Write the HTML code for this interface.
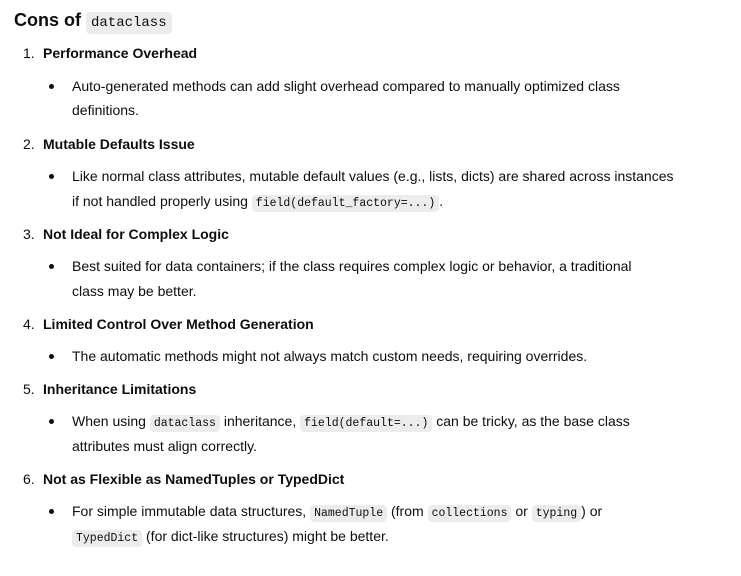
<!DOCTYPE html>
<html><head><style>
body{margin:0;width:741px;height:576px;background:#fff;font-family:"Liberation Sans",sans-serif;color:#0d0d0d;position:relative;overflow:hidden}
.l{position:absolute;white-space:nowrap;font-size:14px;line-height:25px;height:25px}
.h{font-weight:bold}
.n{position:absolute;font-size:14px;line-height:25px}
.d{position:absolute;width:5px;height:5px;border-radius:50%;background:#0d0d0d}
code{font-family:"Liberation Mono",monospace;font-size:11.5px;background:#ececec;border-radius:4px;padding:2px 4px}
</style></head><body>
<div class="l h" style="left:14px;top:8px;font-size:18px;line-height:25px">Cons of <code style="font-size:14px;font-weight:normal;padding:3px 5px">dataclass</code></div>

<div class="n" style="left:23px;top:41px">1.</div><div class="l h" style="left:43px;top:41px">Performance Overhead</div>
<div class="d" style="left:49px;top:84px"></div>
<div class="l" style="left:72px;top:74px">Auto-generated methods can add slight overhead compared to manually optimized class</div>
<div class="l" style="left:72px;top:98px">definitions.</div>

<div class="n" style="left:23px;top:132px">2.</div><div class="l h" style="left:43px;top:132px">Mutable Defaults Issue</div>
<div class="d" style="left:49px;top:174px"></div>
<div class="l" style="left:72px;top:164px">Like normal class attributes, mutable default values (e.g., lists, dicts) are shared across instances</div>
<div class="l" style="left:72px;top:189px">if not handled properly using <code>field(default_factory=...)</code>.</div>

<div class="n" style="left:23px;top:222px">3.</div><div class="l h" style="left:43px;top:222px">Not Ideal for Complex Logic</div>
<div class="d" style="left:49px;top:264px"></div>
<div class="l" style="left:72px;top:254px">Best suited for data containers; if the class requires complex logic or behavior, a traditional</div>
<div class="l" style="left:72px;top:279px">class may be better.</div>

<div class="n" style="left:23px;top:312px">4.</div><div class="l h" style="left:43px;top:312px">Limited Control Over Method Generation</div>
<div class="d" style="left:49px;top:354px"></div>
<div class="l" style="left:72px;top:344px">The automatic methods might not always match custom needs, requiring overrides.</div>

<div class="n" style="left:23px;top:377px">5.</div><div class="l h" style="left:43px;top:377px">Inheritance Limitations</div>
<div class="d" style="left:49px;top:419px"></div>
<div class="l" style="left:72px;top:409px">When using <code>dataclass</code> inheritance, <code>field(default=...)</code> can be tricky, as the base class</div>
<div class="l" style="left:72px;top:434px">attributes must align correctly.</div>

<div class="n" style="left:23px;top:467px">6.</div><div class="l h" style="left:43px;top:467px">Not as Flexible as NamedTuples or TypedDict</div>
<div class="d" style="left:49px;top:509px"></div>
<div class="l" style="left:72px;top:499px">For simple immutable data structures, <code>NamedTuple</code> (from <code>collections</code> or <code>typing</code>) or</div>
<div class="l" style="left:72px;top:524px"><code>TypedDict</code> (for dict-like structures) might be better.</div>
</body></html>
